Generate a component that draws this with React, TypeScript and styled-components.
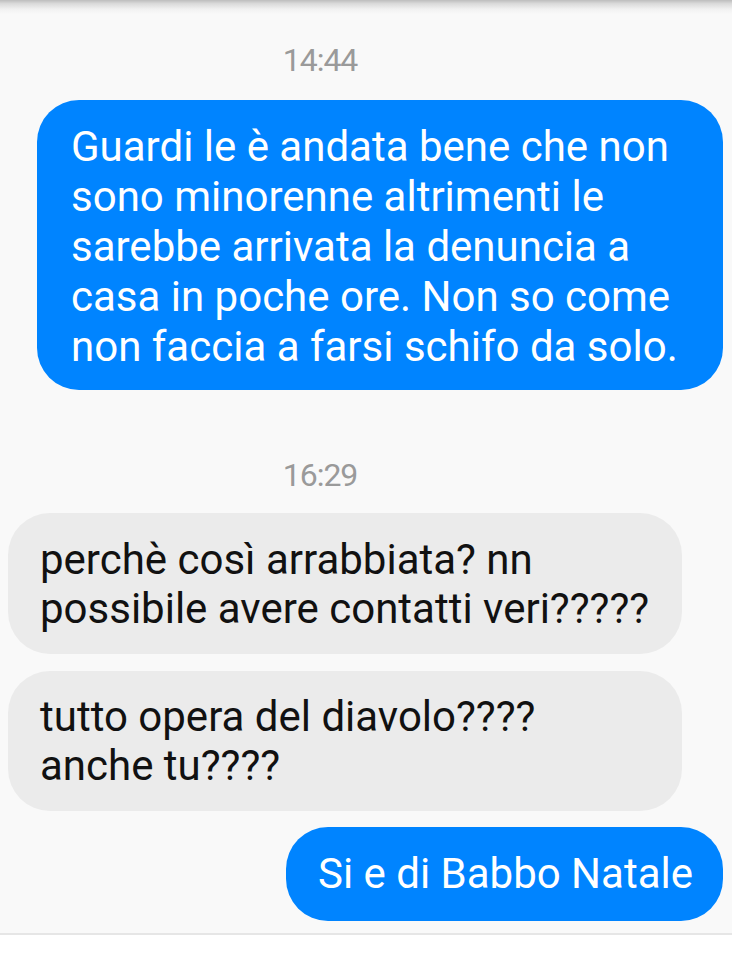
import React from "react";
import styled, { createGlobalStyle } from "styled-components";

const Global = createGlobalStyle`
  html, body { margin: 0; padding: 0; background: #ffffff; overflow: hidden; }
  body { font-family: Roboto, "Noto Sans", "Liberation Sans", sans-serif; }
`;

const Screen = styled.div`
  width: 732px;
  min-height: 960px;
  display: flex;
  flex-direction: column;
  background: #ffffff;
`;

const Chat = styled.main`
  background: #f9f9f9;
  border-bottom: 2px solid #e6e6e6;
  display: flex;
  flex-direction: column;
  padding-bottom: 12px;
`;

const TopShade = styled.div`
  height: 14px;
  background: linear-gradient(#bdbdbd 0%, #d9d9d9 25%, #f1f1f1 65%, #f9f9f9 100%);
`;

const Stamp = styled.div<{ $top: number }>`
  margin-top: ${(p) => p.$top}px;
  padding-right: 92px;
  height: 40px;
  line-height: 40px;
  text-align: center;
  font-size: 32px;
  letter-spacing: -1px;
  color: #9a9a9a;
`;

const Row = styled.div<{ $top: number; $side: "in" | "out" }>`
  margin-top: ${(p) => p.$top}px;
  display: flex;
  justify-content: ${(p) => (p.$side === "out" ? "flex-end" : "flex-start")};
  padding: 0 ${(p) => (p.$side === "out" ? 9 : 8)}px 0 8px;
`;

const Bubble = styled.div<{
  $side: "in" | "out";
  $w?: number;
  $pt: number;
  $pb: number;
  $lh: number;
  $px: number;
  $pr?: number;
}>`
  box-sizing: border-box;
  ${(p) => (p.$w ? `width: ${p.$w}px;` : "")}
  padding: ${(p) => p.$pt}px ${(p) => p.$pr ?? p.$px}px ${(p) => p.$pb}px
    ${(p) => p.$px}px;
  border-radius: 42px;
  background: ${(p) => (p.$side === "out" ? "#0084ff" : "#ebebeb")};
  color: ${(p) => (p.$side === "out" ? "#ffffff" : "#111111")};
  font-size: 42px;
  line-height: ${(p) => p.$lh}px;
  white-space: nowrap;
`;

const Line = styled.span`
  display: block;
`;

export default function App() {
  return (
    <>
      <Global />
      <Screen>
        <Chat>
          <TopShade />
          <Stamp $top={26}>14:44</Stamp>
          <Row $top={20} $side="out">
            <Bubble $side="out" $w={686} $pt={22} $pb={18} $lh={50} $px={34}>
              <Line>Guardi le è andata bene che non</Line>
              <Line>sono minorenne altrimenti le</Line>
              <Line>sarebbe arrivata la denuncia a</Line>
              <Line>casa in poche ore. Non so come</Line>
              <Line>non faccia a farsi schifo da solo.</Line>
            </Bubble>
          </Row>
          <Stamp $top={65}>16:29</Stamp>
          <Row $top={18} $side="in">
            <Bubble $side="in" $w={674} $pt={21.5} $pb={21.5} $lh={49} $px={32}>
              <Line>perchè così arrabbiata? nn</Line>
              <Line>possibile avere contatti veri?????</Line>
            </Bubble>
          </Row>
          <Row $top={17} $side="in">
            <Bubble $side="in" $w={674} $pt={21} $pb={21} $lh={49} $px={32}>
              <Line>tutto opera del diavolo????</Line>
              <Line>anche tu????</Line>
            </Bubble>
          </Row>
          <Row $top={16} $side="out">
            <Bubble $side="out" $pt={22} $pb={22} $lh={50} $px={32} $pr={30}>
              <Line>Si e di Babbo Natale</Line>
            </Bubble>
          </Row>
        </Chat>
      </Screen>
    </>
  );
}
